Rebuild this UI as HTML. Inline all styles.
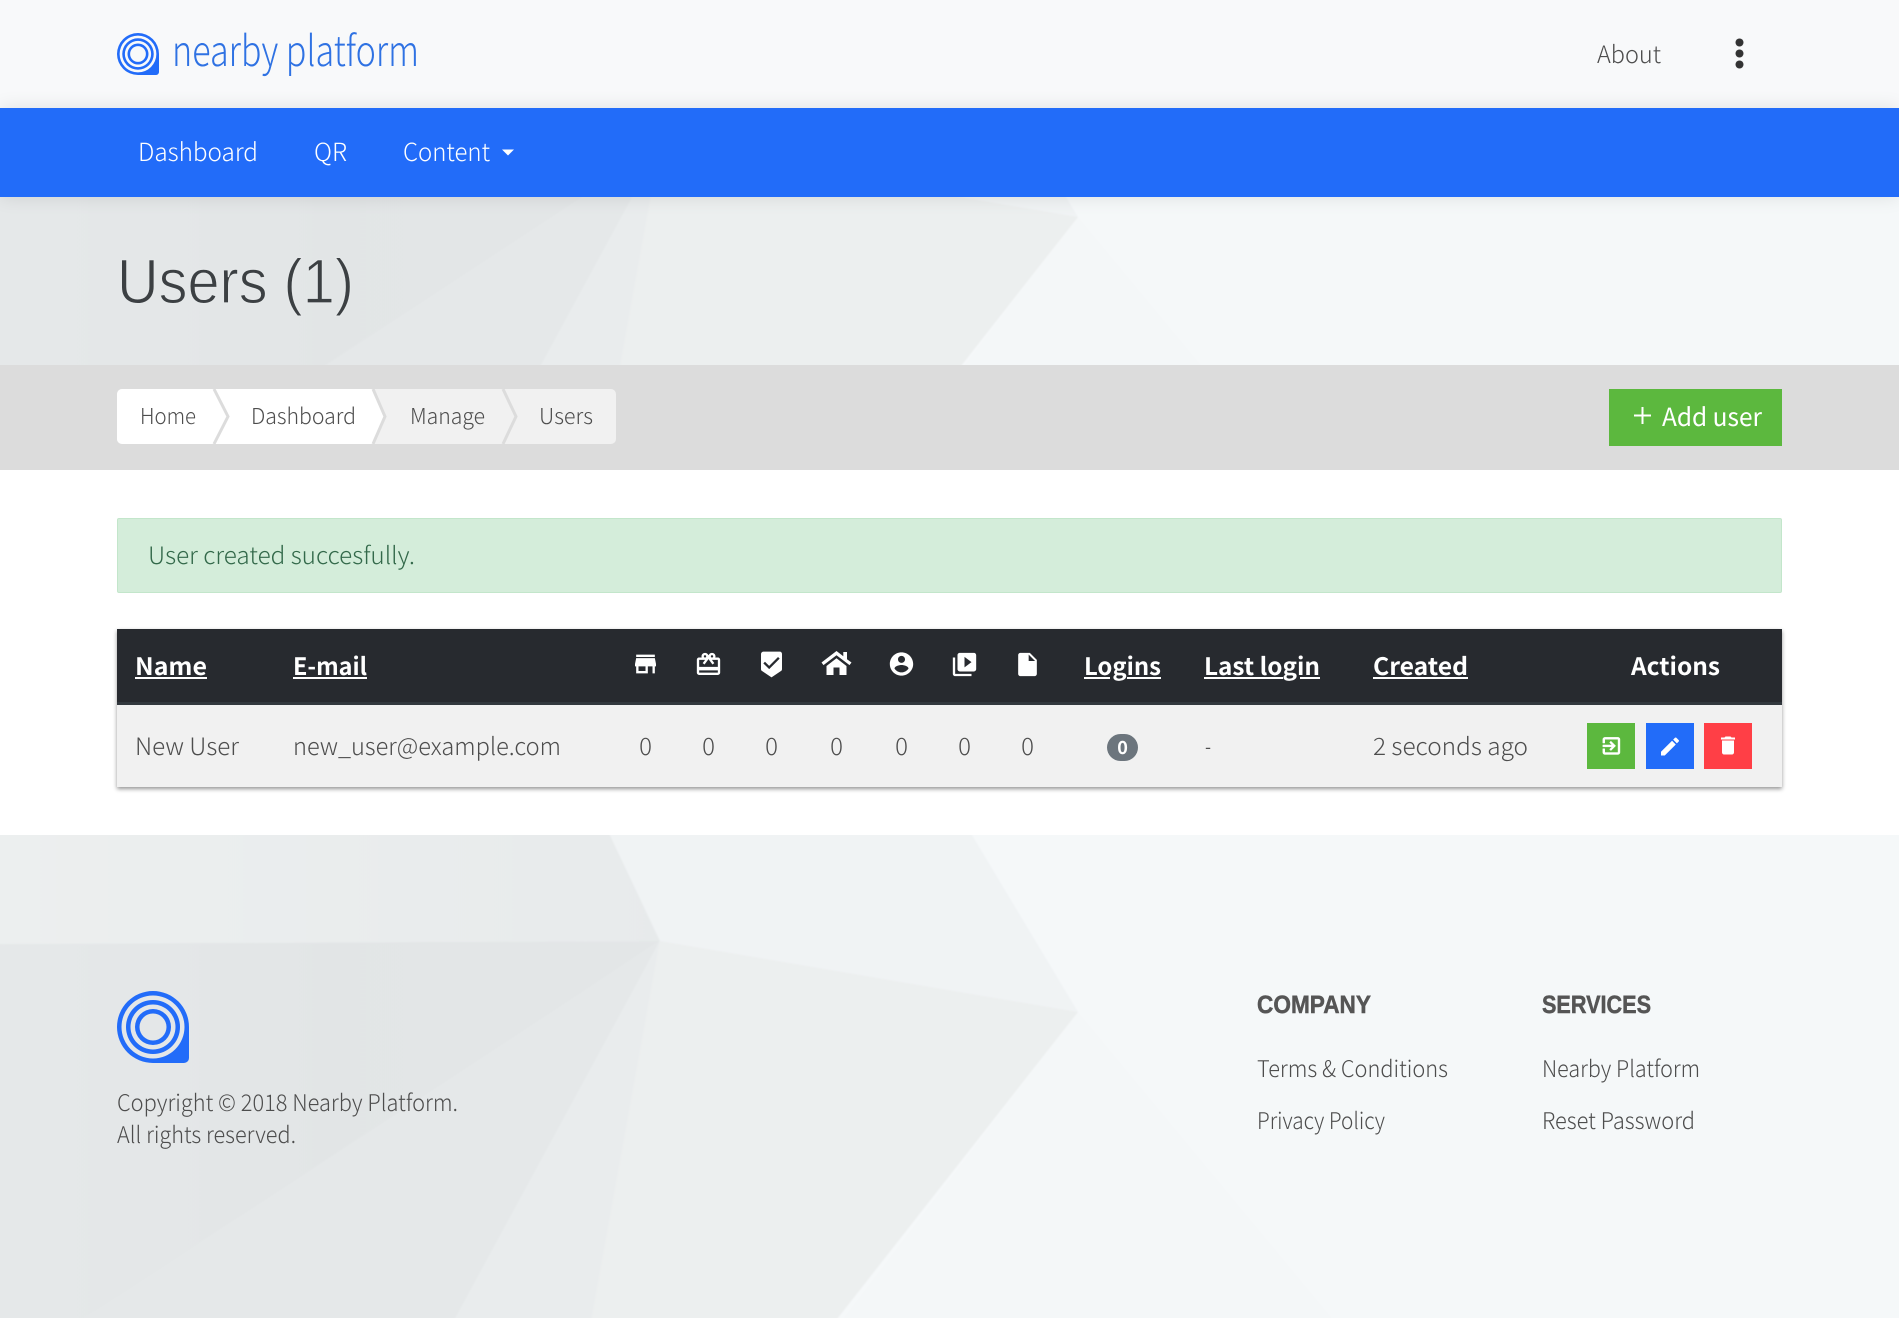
<!DOCTYPE html>
<html lang="en">
<head>
<meta charset="utf-8">
<title>Users (1) - nearby platform</title>
<style>
html,body{margin:0;padding:0;width:1899px;height:1318px;overflow:hidden;background:#fff}
.abs{position:absolute;left:0;width:1899px}
.top{top:0;height:108px;background:#f8f9fa}
.nav{top:108px;height:89px;background:#226cf9;box-shadow:0 0 18px rgba(0,0,0,.1);z-index:2}
.hero{top:197px;height:168px;overflow:hidden;background:#f5f8f9}
.crumbs{top:365px;height:105px;background:#dcdcdc}
.main{top:470px;height:365px;background:#fff}
.foot{top:835px;height:483px;overflow:hidden;background:#f5f8f9}
.abs svg{display:block}
.alert{position:absolute;left:117px;top:518px;width:1663px;height:73px;background:#d4edda;border:1px solid #c3e6cb;border-radius:2px}
.table{position:absolute;left:117px;top:629px;width:1665px;height:158px;background:#f1f1f1;box-shadow:0 2px 4px rgba(0,0,0,.42)}
.thead{height:73px;background:#272a2f;border-bottom:3px solid #32383e}
#ov{position:absolute;left:0;top:0;z-index:5}
text{font-family:"Noto Sans CJK JP","Liberation Sans",sans-serif;text-rendering:geometricPrecision}
.l{font-weight:300;fill:#4d4d4d}
.b{font-weight:700;fill:#fff;font-size:24px}
.w{fill:#fff}
.h{font-family:"Liberation Sans",sans-serif;font-weight:700;fill:#555;stroke:#555;stroke-width:.5px}
</style>
</head>
<body>
<header class="abs top"></header>
<nav class="abs nav"></nav>
<section class="abs hero"><svg width="1899" height="168" viewBox="0 992 1899 168"><use href="#bg"/></svg></section>
<section class="abs crumbs"></section>
<main class="abs main"></main>
<div class="alert"></div>
<div class="table"><div class="thead"></div></div>
<footer class="abs foot"><svg width="1899" height="483" viewBox="0 835 1899 483"><use href="#bg"/></svg></footer>

<svg id="ov" width="1899" height="1318" viewBox="0 0 1899 1318" xmlns="http://www.w3.org/2000/svg">
<defs>
<linearGradient id="g1" x1="0" x2="1" y1="0" y2="0"><stop offset="0" stop-color="#ecefef"/><stop offset="1" stop-color="#e7eaeb"/></linearGradient>
<linearGradient id="g2" x1="0" x2="1" y1="0" y2="0"><stop offset="0" stop-color="#e5e8e9"/><stop offset=".5" stop-color="#e2e5e6"/><stop offset="1" stop-color="#e3e6e7"/></linearGradient>
<filter id="soft" x="0" y="0" width="100%" height="100%"><feGaussianBlur stdDeviation=".8"/></filter>
<g id="bg" filter="url(#soft)">
<rect x="-10" y="825" width="1919" height="503" fill="#f5f8f9"/>
<polygon points="1078,1012 1340,1328 836,1328" fill="#f4f7f8"/>
<polygon points="605,825 966,825 1078,1012 660,941" fill="#f0f3f4"/>
<polygon points="-10,825 605,825 660,941 -10,944" fill="url(#g1)"/>
<polygon points="660,941 1078,1012 830,1328 585,1328" fill="#ecefef"/>
<polygon points="660,941 590,1328 445,1328" fill="#e9eced"/>
<polygon points="660,941 450,1328 65,1328" fill="#e5e8e9"/>
<polygon points="-10,944 660,941 70,1328 -10,1328" fill="url(#g2)"/>
</g>
<path id="logo" fill="#226cf9" fill-rule="evenodd" d="M36 0A36 36 0 0 1 72 36V67A5 5 0 0 1 67 72H36A36 36 0 0 1 36 0ZM36 4.500a31.500 31.500 0 1 0 0 63a31.500 31.500 0 1 0 0-63ZM36 9a27 27 0 1 1 0 54a27 27 0 1 1 0-54ZM36 13.500a22.500 22.500 0 1 0 0 45a22.500 22.500 0 1 0 0-45ZM36 18a18 18 0 1 1 0 36a18 18 0 1 1 0-36ZM36 22.500a13.500 13.500 0 1 0 0 27a13.500 13.500 0 1 0 0-27Z"/>
</defs>

<!-- header -->
<use href="#logo" transform="translate(117 33) scale(.5833)"/>
<text x="172" y="66" textLength="247" lengthAdjust="spacingAndGlyphs" font-size="42" class="l" style="fill:#2f72e3">nearby platform</text>
<text x="1597" y="63" textLength="64" lengthAdjust="spacingAndGlyphs" font-size="24" class="l">About</text>
<circle cx="1739.500" cy="42.500" r="4" fill="#333"/><circle cx="1739.500" cy="53.500" r="4" fill="#333"/><circle cx="1739.500" cy="64.500" r="4" fill="#333"/>

<!-- nav -->
<text x="138" y="161" textLength="120" lengthAdjust="spacingAndGlyphs" font-size="25" class="l w" style="fill:#fff">Dashboard</text>
<text x="314" y="161" textLength="33" lengthAdjust="spacingAndGlyphs" font-size="25" class="l w" style="fill:#fff">QR</text>
<text x="403" y="161" textLength="87" lengthAdjust="spacingAndGlyphs" font-size="25" class="l w" style="fill:#fff">Content</text>
<polygon points="502,149.500 514,149.500 508,155.500" fill="#fff"/>

<!-- title -->
<text x="117" y="303" textLength="237" lengthAdjust="spacingAndGlyphs" font-size="63" style="font-family:'Liberation Sans',sans-serif;font-weight:400;fill:#3c4043;stroke:#e5e8e9;stroke-width:1.200px">Users (1)</text>

<!-- breadcrumb -->
<rect x="117" y="389" width="499" height="55" rx="5" fill="#f1f1f1"/>
<path d="M122 389H373L385 416.500L373 444H122a5 5 0 0 1-5-5V394a5 5 0 0 1 5-5Z" fill="#fff"/>
<g fill="none" stroke="#dcdcdc" stroke-width="3">
<polyline points="214,389 228,416.500 214,444"/>
<polyline points="373,389 385,416.500 373,444"/>
<polyline points="503,389 516,416.500 503,444"/>
</g>
<text x="140" y="424" textLength="56" lengthAdjust="spacingAndGlyphs" font-size="22" class="l">Home</text>
<text x="251" y="424" textLength="105" lengthAdjust="spacingAndGlyphs" font-size="22" class="l">Dashboard</text>
<text x="410" y="424" textLength="75" lengthAdjust="spacingAndGlyphs" font-size="22" class="l">Manage</text>
<text x="539" y="424" textLength="54" lengthAdjust="spacingAndGlyphs" font-size="22" class="l">Users</text>

<!-- add user -->
<rect x="1609" y="389" width="173" height="57" fill="#5cb83e"/>
<rect x="1634" y="414.500" width="17" height="2" fill="#fff"/><rect x="1641.500" y="407" width="2" height="17" fill="#fff"/>
<text x="1662" y="426" textLength="100" lengthAdjust="spacingAndGlyphs" font-size="25" style="fill:#fff;font-weight:400">Add user</text>

<!-- alert -->
<text x="148" y="564" textLength="267" lengthAdjust="spacingAndGlyphs" font-size="24" class="l" style="fill:#33694a">User created succesfully.</text>

<!-- table head -->
<text x="135" y="675" textLength="72" lengthAdjust="spacingAndGlyphs" class="b">Name</text>
<rect x="135" y="677" width="72" height="2" fill="#fff"/>
<text x="293" y="675" textLength="74" lengthAdjust="spacingAndGlyphs" class="b">E-mail</text>
<rect x="293" y="677" width="74" height="2" fill="#fff"/>
<text x="1084" y="675" textLength="77" lengthAdjust="spacingAndGlyphs" class="b">Logins</text>
<rect x="1084" y="677" width="26" height="2" fill="#fff"/><rect x="1127" y="677" width="34" height="2" fill="#fff"/>
<text x="1204" y="675" textLength="116" lengthAdjust="spacingAndGlyphs" class="b">Last login</text>
<rect x="1204" y="677" width="79" height="2" fill="#fff"/><rect x="1300" y="677" width="20" height="2" fill="#fff"/>
<text x="1373" y="675" textLength="95" lengthAdjust="spacingAndGlyphs" class="b">Created</text>
<rect x="1373" y="677" width="95" height="2" fill="#fff"/>
<text x="1631" y="675" textLength="89" lengthAdjust="spacingAndGlyphs" class="b">Actions</text>

<!-- head icons -->
<g fill="#fff">
<path transform="translate(631.500 650) scale(1.167)" d="M20 4H4v2h16V4zm1 10v-2l-1-5H4l-1 5v2h1v6h10v-6h4v6h2v-6h1zm-9 4H6v-4h6v4z"/>
<path transform="translate(694.500 650.500) scale(1.167)" d="M20 6h-2.180c.11-.31.18-.65.18-1 0-1.660-1.340-3-3-3-1.050 0-1.960.54-2.500 1.350l-.5.67-.5-.68C10.960 2.540 10.050 2 9 2 7.340 2 6 3.340 6 5c0 .35.07.69.18 1H4c-1.110 0-1.990.89-1.990 2L2 19c0 1.110.89 2 2 2h16c1.110 0 2-.89 2-2V8c0-1.110-.89-2-2-2zm-5-2c.55 0 1 .45 1 1s-.45 1-1 1-1-.45-1-1 .45-1 1-1zM9 4c.55 0 1 .45 1 1s-.45 1-1 1-1-.45-1-1 .45-1 1-1zm11 15H4v-2h16v2zm0-5H4V8h5.080L7 10.830 8.620 12 11 8.760l1-1.360 1 1.360L15.380 12 17 10.830 14.920 8H20v6z"/>
<path transform="translate(757.500 650.500) scale(1.167)" d="M19 1H5c-1.100 0-1.990.9-1.990 2L3 15.930c0 .69.35 1.300.88 1.660L12 23l8.110-5.410c.53-.36.88-.97.88-1.660L21 3c0-1.100-.9-2-2-2zm-9 15l-5-5 1.410-1.410L10 13.170l7.590-7.590L19 7l-9 9z"/>
<path transform="translate(821.500 651)" d="M0 11.500L15 0l6.800 5.200V1h3.700v7.200L30 11.500l-2 2.600L15 4.200 2 14.100ZM5 15L15 7.300 25 15v9h-7v-7.500h-6V24H5Z"/>
<path transform="translate(887.500 650) scale(1.167)" d="M12 2C6.480 2 2 6.480 2 12s4.480 10 10 10 10-4.480 10-10S17.520 2 12 2zm0 3c1.660 0 3 1.340 3 3s-1.340 3-3 3-3-1.340-3-3 1.340-3 3-3zm0 14.200c-2.500 0-4.710-1.280-6-3.220.03-1.990 4-3.080 6-3.080 1.990 0 5.970 1.090 6 3.080-1.290 1.940-3.500 3.220-6 3.220z"/>
<path transform="translate(950.500 650.500) scale(1.167)" d="M4 6H2v14c0 1.100.9 2 2 2h14v-2H4V6zm16-4H8c-1.100 0-2 .9-2 2v12c0 1.100.9 2 2 2h12c1.100 0 2-.9 2-2V4c0-1.100-.9-2-2-2zm-8 12.500v-9l6 4.500-6 4.500z"/>
<path transform="translate(1013.500 650.500) scale(1.167)" d="M6 2c-1.100 0-1.990.9-1.990 2L4 20c0 1.100.89 2 1.990 2H18c1.100 0 2-.9 2-2V8l-6-6H6zm7 7V3.500L18.500 9H13z"/>
</g>

<!-- row -->
<text x="135" y="755" textLength="104" lengthAdjust="spacingAndGlyphs" font-size="24" class="l">New User</text>
<text x="293" y="755" textLength="268" lengthAdjust="spacingAndGlyphs" font-size="24" class="l">new_user@example.com</text>
<g font-size="24" text-anchor="middle">
<text x="645.500" y="755" class="l">0</text>
<text x="708.500" y="755" class="l">0</text>
<text x="771.500" y="755" class="l">0</text>
<text x="836.500" y="755" class="l">0</text>
<text x="901.500" y="755" class="l">0</text>
<text x="964.500" y="755" class="l">0</text>
<text x="1027.500" y="755" class="l">0</text>
</g>
<rect x="1107" y="734" width="31" height="27" rx="13.500" fill="#6c757d"/>
<text x="1122.500" y="754" font-size="18" text-anchor="middle" style="fill:#fff;font-weight:700">0</text>
<text x="1205" y="755" textLength="6" lengthAdjust="spacingAndGlyphs" font-size="24" class="l">-</text>
<text x="1373" y="755" textLength="155" lengthAdjust="spacingAndGlyphs" font-size="24" class="l">2 seconds ago</text>

<!-- actions -->
<rect x="1587" y="723" width="48" height="46" fill="#5cb83e"/>
<rect x="1646" y="723" width="48" height="46" fill="#226cf9"/>
<rect x="1704" y="723" width="48" height="46" fill="#ff3f46"/>
<g fill="#fff">
<path transform="translate(1600 734.500) scale(.95)" stroke="#fff" stroke-width=".5" d="M10.090 15.590L11.500 17l5-5-5-5-1.410 1.410L12.670 11H3v2h9.670l-2.580 2.590zM19 3H5c-1.110 0-2 .9-2 2v4h2V5h14v14H5v-4H3v4c0 1.100.89 2 2 2h14c1.100 0 2-.9 2-2V5c0-1.100-.9-2-2-2z"/>
<path transform="translate(1658 734.500)" d="M3 17.250V21h3.750L17.810 9.940l-3.750-3.750L3 17.250zM20.710 7.040c.39-.39.39-1.020 0-1.410l-2.340-2.340c-.39-.39-1.020-.39-1.410 0l-1.830 1.830 3.750 3.750 1.830-1.830z"/>
<path transform="translate(1716 733.500)" d="M6 19c0 1.100.9 2 2 2h8c1.100 0 2-.9 2-2V7H6v12zM19 4h-3.500l-1-1h-5l-1 1H5v2h14V4z"/>
</g>

<!-- footer -->
<use href="#logo" transform="translate(117 991)"/>
<text x="117" y="1111" textLength="341" lengthAdjust="spacingAndGlyphs" font-size="23" class="l">Copyright © 2018 Nearby Platform.</text>
<text x="117" y="1143" textLength="179" lengthAdjust="spacingAndGlyphs" font-size="23" class="l">All rights reserved.</text>
<text x="1257" y="1013" textLength="114" lengthAdjust="spacingAndGlyphs" font-size="25" class="h">COMPANY</text>
<text x="1542" y="1013" textLength="109" lengthAdjust="spacingAndGlyphs" font-size="25" class="h">SERVICES</text>
<text x="1257" y="1077" textLength="191" lengthAdjust="spacingAndGlyphs" font-size="23" class="l">Terms &amp; Conditions</text>
<text x="1257" y="1129" textLength="128" lengthAdjust="spacingAndGlyphs" font-size="23" class="l">Privacy Policy</text>
<text x="1542" y="1077" textLength="158" lengthAdjust="spacingAndGlyphs" font-size="23" class="l">Nearby Platform</text>
<text x="1542" y="1129" textLength="153" lengthAdjust="spacingAndGlyphs" font-size="23" class="l">Reset Password</text>
</svg>
</body>
</html>
